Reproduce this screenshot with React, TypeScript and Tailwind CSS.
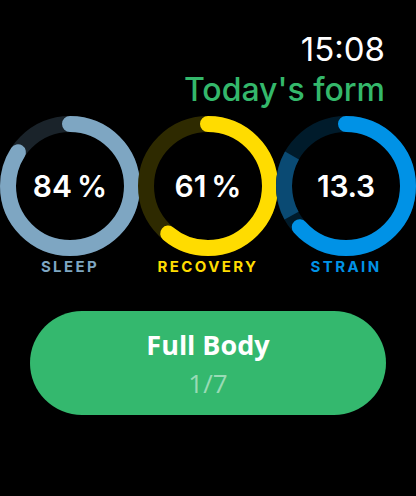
import React from "react";

const R = 62;
const C = 2 * Math.PI * R;

type Seg = { from: number; to: number; color: string };

const Ring = ({
  value,
  track,
  color,
  extra,
}: {
  value: number;
  track: string;
  color: string;
  extra?: Seg;
}) => {
  const len = (value / 100) * C;
  return (
    <svg width="140" height="140" viewBox="0 0 140 140" className="[grid-area:1/1]">
      <g transform="rotate(-90 70 70)">
        <circle cx="70" cy="70" r={R} fill="none" stroke={track} strokeWidth="16" />
        {extra && (
          <circle
            cx="70"
            cy="70"
            r={R}
            fill="none"
            stroke={extra.color}
            strokeWidth="16"
            strokeDasharray={`${((extra.to - extra.from) / 360) * C} ${C}`}
            strokeDashoffset={`${-(extra.from / 360) * C}`}
          />
        )}
        <circle
          cx="70"
          cy="70"
          r={R}
          fill="none"
          stroke={color}
          strokeWidth="16"
          strokeLinecap="round"
          strokeDasharray={`${len} ${C}`}
        />
      </g>
    </svg>
  );
};

const Metric = ({
  label,
  value,
  pct,
  track,
  color,
  extra,
  first,
}: {
  label: string;
  value: string;
  pct: number;
  track: string;
  color: string;
  extra?: Seg;
  first?: boolean;
}) => (
  <div className={`flex flex-col items-center w-[140px] shrink-0 ${first ? "" : "-ml-[2px]"}`}>
    <div className="grid place-items-center">
      <Ring value={pct} track={track} color={color} extra={extra} />
      <span className="[grid-area:1/1] text-white text-[30px] font-semibold leading-none font-['Inter',sans-serif] tracking-[-0.01em]">
        {value}
      </span>
    </div>
    <span
      className="mt-[3px] text-[15px] font-bold leading-none tracking-[0.16em] font-['Inter',sans-serif]"
      style={{ color }}
    >
      {label}
    </span>
  </div>
);

export default function App() {
  return (
    <div className="w-[416px] h-[496px] bg-black overflow-hidden flex flex-col font-['Inter',sans-serif]">
      <div className="flex flex-col items-end pr-[31px] pt-[33px]">
        <span className="text-white text-[33px] leading-none">15:08</span>
        <span className="text-[#34b86b] text-[32px] font-medium leading-none mt-[8px]">Today's form</span>
      </div>
      <div className="flex mt-[10px]">
        <Metric first label="SLEEP" value={"84\u202F%"} pct={84} track="#1a232a" color="#7ea6c2" />
        <Metric label="RECOVERY" value={"61\u202F%"} pct={61} track="#2e2a00" color="#ffdc00" />
        <Metric
          label="STRAIN"
          value="13.3"
          pct={63.3}
          track="#001b2b"
          color="#0092e6"
          extra={{ from: 241, to: 299, color: "#0a4a73" }}
        />
      </div>
      <div className="mx-[30px] mt-[37px] h-[104px] rounded-[52px] bg-[#34b86e] flex flex-col items-center justify-center font-['Open_Sans',sans-serif]">
        <span className="text-white text-[27px] font-bold leading-none">Full Body</span>
        <span className="text-white/50 text-[26px] leading-none mt-[12px]">1/7</span>
      </div>
    </div>
  );
}
